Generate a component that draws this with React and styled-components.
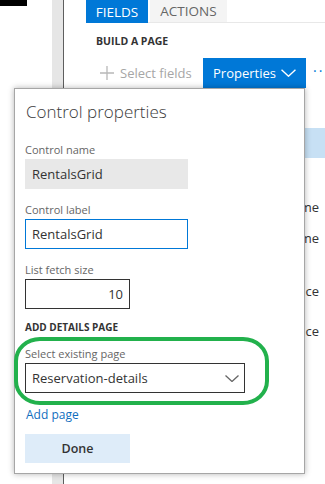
import React from "react";
import styled, { createGlobalStyle } from "styled-components";

const GlobalStyle = createGlobalStyle`
  html, body { margin: 0; padding: 0; background: #fff; }
  body { font-family: "Segoe UI", "Open Sans", "Noto Sans", sans-serif; color: #333; }
`;

const Page = styled.div`
  position: relative;
  width: 325px;
  height: 484px;
  overflow: hidden;
  display: flex;
  background: #fff;
`;

const LeftArea = styled.div`
  width: 52px;
  flex: none;
`;

const BlackBar = styled.div`
  width: 27px;
  height: 6px;
  background: #000;
`;

const NavStrip = styled.div`
  width: 11px;
  flex: none;
  background: #e6e6e6;
  border-right: 1px solid #5e5e5e;
`;

const Main = styled.div`
  flex: 1;
  display: flex;
  flex-direction: column;
  padding-left: 22px;
`;

const TabRow = styled.div`
  display: flex;
  gap: 2px;
  height: 22px;
  border-bottom: 1px solid #e8e8e8;
`;

const Tab = styled.div`
  height: ${(p) => (p.$active ? "23px" : "22px")};
  display: flex;
  align-items: center;
  justify-content: center;
  font-size: 13.5px;
  background: ${(p) => (p.$active ? "#0078d7" : "#f4f4f4")};
  color: ${(p) => (p.$active ? "#fff" : "#666")};
  width: ${(p) => p.$w}px;
  box-sizing: border-box;
`;

const SectionTitle = styled.div`
  font-size: 10.5px;
  font-weight: 700;
  color: #333;
  padding-left: 10px;
  margin-top: 10px;
  line-height: 16px;
`;

const CommandBar = styled.div`
  display: flex;
  align-items: center;
  height: 30px;
  margin-top: 9px;
`;

const GhostCommand = styled.div`
  display: flex;
  align-items: center;
  gap: 6px;
  padding-left: 14px;
  width: 117px;
  box-sizing: border-box;
  font-size: 13px;
  color: #a6a6a6;
`;

const PrimaryCommand = styled.div`
  display: flex;
  align-items: center;
  gap: 5px;
  height: 30px;
  width: 103px;
  box-sizing: border-box;
  padding-left: 10px;
  background: #0078d7;
  color: #fff;
  font-size: 13px;
`;

const More = styled.div`
  margin-left: 7px;
  color: #0078d7;
  font-size: 14px;
  letter-spacing: 2px;
  line-height: 1;
  margin-top: -4px;
`;

const List = styled.div`
  display: flex;
  flex-direction: column;
  margin-top: 40px;
`;

const ListRow = styled.div`
  height: 30px;
  margin-top: ${(p) => p.$mt || 0}px;
  display: flex;
  align-items: center;
  justify-content: flex-end;
  padding-right: 6px;
  font-size: 13px;
  color: #333;
  background: ${(p) => (p.$selected ? "#c7e0f4" : "transparent")};
`;

const Panel = styled.div`
  position: absolute;
  left: 14px;
  top: 88px;
  width: 291px;
  height: 386px;
  box-sizing: border-box;
  background: #fff;
  border: 1px solid #a6a6a6;
  box-shadow: 0 0 6px rgba(0, 0, 0, 0.3);
  padding: 11px 10px 0 10px;
  display: flex;
  flex-direction: column;
  align-items: flex-start;
`;

const PanelTitle = styled.div`
  font-size: 17px;
  font-weight: 300;
  color: #3a3a3a;
  line-height: 24px;
  padding-left: 1px;
  margin-bottom: 18px;
`;

const Label = styled.div`
  font-size: 11px;
  color: #666;
  line-height: 16px;
  margin-bottom: 1px;
`;

const Field = styled.div`
  width: ${(p) => p.$w}px;
  height: 30px;
  box-sizing: border-box;
  display: flex;
  align-items: center;
  justify-content: ${(p) => (p.$right ? "flex-end" : "space-between")};
  padding: 0 ${(p) => (p.$right ? "6px" : "5px")} 0 6px;
  font-size: 13px;
  color: #333;
  background: ${(p) => (p.$readonly ? "#e8e8e8" : "#fff")};
  border: 1px solid
    ${(p) => (p.$readonly ? "#e8e8e8" : p.$focus ? "#0078d7" : "#333")};
  margin-bottom: ${(p) => p.$mb || 0}px;
`;

const GroupTitle = styled.div`
  font-size: 10px;
  font-weight: 700;
  color: #333;
  line-height: 14px;
  margin-bottom: 12px;
`;

const Highlight = styled.div`
  position: absolute;
  left: -1px;
  top: 248px;
  width: 255px;
  height: 68px;
  box-sizing: border-box;
  border: 4px solid #22b14c;
  border-radius: 26px / 24px;
  pointer-events: none;
`;

const LinkText = styled.a`
  font-size: 12px;
  color: #106ebe;
  text-decoration: none;
  line-height: 16px;
  margin-top: 14px;
  padding-left: 1px;
`;

const DoneButton = styled.div`
  width: 105px;
  height: 29px;
  margin-top: 11px;
  background: #deecf9;
  color: #333;
  font-size: 12.5px;
  font-weight: 600;
  display: flex;
  align-items: center;
  justify-content: center;
`;

const Chevron = ({ color = "#fff", w = 14 }) => (
  <svg width={w} height={Math.round(w / 2)} viewBox="0 0 14 7" fill="none">
    <polyline points="0.5,0.5 7,6.5 13.5,0.5" stroke={color} strokeWidth="1.3" />
  </svg>
);

const Plus = () => (
  <svg width="14" height="14" viewBox="0 0 14 14">
    <path d="M7 0 V14 M0 7 H14" stroke="#b8b8b8" strokeWidth="1.3" />
  </svg>
);

export default function App() {
  return (
    <>
      <GlobalStyle />
      <Page>
        <LeftArea>
          <BlackBar />
        </LeftArea>
        <NavStrip />
        <Main>
          <TabRow>
            <Tab $active $w={62}>FIELDS</Tab>
            <Tab $w={77}>ACTIONS</Tab>
          </TabRow>
          <SectionTitle>BUILD A PAGE</SectionTitle>
          <CommandBar>
            <GhostCommand>
              <Plus />
              Select fields
            </GhostCommand>
            <PrimaryCommand>
              Properties
              <Chevron w={15} />
            </PrimaryCommand>
            <More>··</More>
          </CommandBar>
          <List>
            <ListRow $selected />
            <ListRow />
            <ListRow $mt={4}>Name</ListRow>
            <ListRow $mt={1}>Name</ListRow>
            <ListRow $mt={23}>Insurance</ListRow>
            <ListRow $mt={10}>Insurance</ListRow>
          </List>
        </Main>
        <Panel>
          <PanelTitle>Control properties</PanelTitle>
          <Label>Control name</Label>
          <Field $w={163} $readonly $mb={13}>RentalsGrid</Field>
          <Label>Control label</Label>
          <Field $w={163} $focus $mb={13}>RentalsGrid</Field>
          <Label>List fetch size</Label>
          <Field $w={105} $right $mb={11}>10</Field>
          <GroupTitle>ADD DETAILS PAGE</GroupTitle>
          <Label>Select existing page</Label>
          <Field $w={220}>
            Reservation-details
            <Chevron color="#666" w={14} />
          </Field>
          <LinkText href="#">Add page</LinkText>
          <DoneButton>Done</DoneButton>
          <Highlight />
        </Panel>
      </Page>
    </>
  );
}
